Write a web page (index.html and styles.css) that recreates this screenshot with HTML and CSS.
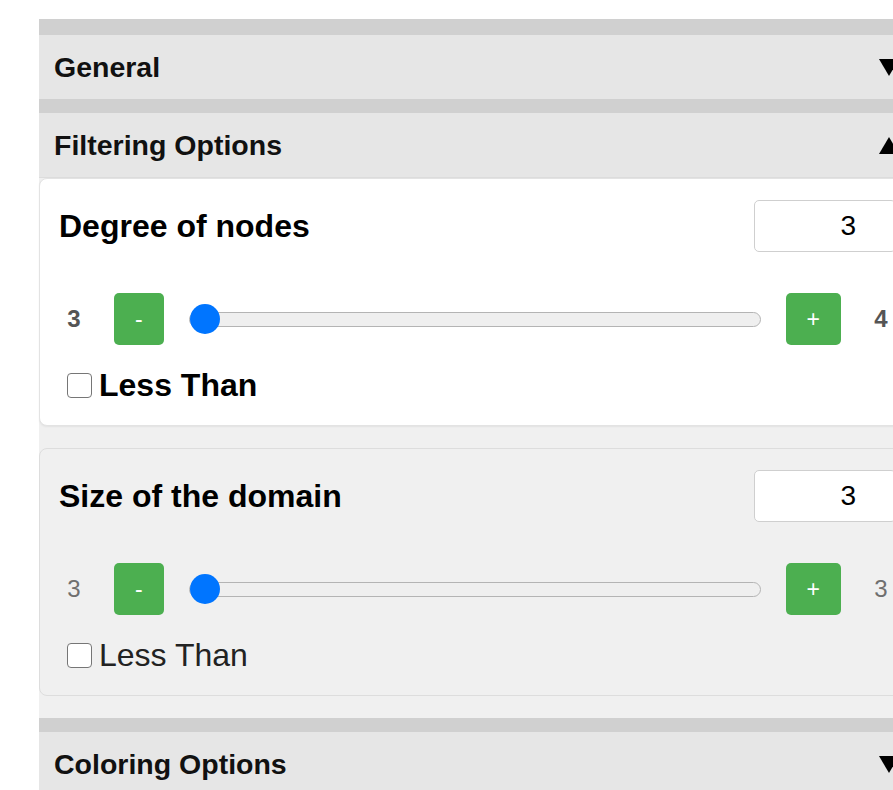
FILE: index.html
```html
<!DOCTYPE html>
<html lang="en">
<head>
<meta charset="utf-8">
<title>Graph settings</title>
<link rel="stylesheet" href="styles.css">
</head>
<body>
<div class="panel">
  <section class="section">
    <div class="section-header">
      <span class="section-title">General</span>
      <svg class="caret" width="20" height="17" viewBox="0 0 20 17"><polygon points="0,0 20,0 10,17"/></svg>
    </div>
  </section>

  <section class="section is-open">
    <div class="section-header">
      <span class="section-title">Filtering Options</span>
      <svg class="caret" width="20" height="17" viewBox="0 0 20 17"><polygon points="10,0 20,17 0,17"/></svg>
    </div>
    <div class="section-body">
      <div class="filter-card is-active">
        <div class="filter-head">
          <span class="filter-name">Degree of nodes</span>
          <input class="filter-value" type="text" value="3">
        </div>
        <div class="filter-range">
          <span class="range-end">3</span>
          <button class="step-btn" type="button">-</button>
          <input class="range" type="range" min="3" max="4" value="3">
          <button class="step-btn" type="button">+</button>
          <span class="range-end">4</span>
        </div>
        <label class="less-than"><input type="checkbox">Less Than</label>
      </div>

      <div class="filter-card">
        <div class="filter-head">
          <span class="filter-name">Size of the domain</span>
          <input class="filter-value" type="text" value="3">
        </div>
        <div class="filter-range">
          <span class="range-end">3</span>
          <button class="step-btn" type="button">-</button>
          <input class="range" type="range" min="3" max="3" value="3">
          <button class="step-btn" type="button">+</button>
          <span class="range-end">3</span>
        </div>
        <label class="less-than"><input type="checkbox">Less Than</label>
      </div>
    </div>
  </section>

  <section class="section">
    <div class="section-header">
      <span class="section-title">Coloring Options</span>
      <svg class="caret" width="20" height="17" viewBox="0 0 20 17"><polygon points="0,0 20,0 10,17"/></svg>
    </div>
  </section>
</div>
</body>
</html>
```

FILE: styles.css
```css
html, body {
  margin: 0;
  padding: 0;
  background: #fff;
  overflow: hidden;
}

body {
  font-family: "Liberation Sans", Arial, sans-serif;
  color: #000;
}

.panel {
  width: 877px;
  margin: 19px 0 0 39px;
  border-top: 2px solid #d0d0d0;
}

/* accordion sections */
.section {
  border-top: 14px solid #d0d0d0;
}

.section-header {
  display: flex;
  align-items: center;
  justify-content: space-between;
  height: 64px;
  padding: 0 17px 0 15px;
  background: #e6e6e6;
}

.section-title {
  font-size: 28.5px;
  font-weight: bold;
  color: #111;
}

.caret {
  display: block;
  fill: #000;
}

.is-open .section-header {
  border-bottom: 1px solid #dcdcdc;
}

.section-body {
  display: flex;
  flex-direction: column;
  gap: 22px;
  padding-bottom: 22px;
  background: #f0f0f0;
}

/* filter cards */
.filter-card {
  padding: 21px 19px;
  background: #f0f0f0;
  border: 1px solid #dddddd;
  border-radius: 8px;
}

.filter-card.is-active {
  background: #fff;
  border-color: #e3e3e3;
  box-shadow: 0 1px 2px rgba(0, 0, 0, 0.06);
}

.filter-head {
  display: flex;
  align-items: center;
  justify-content: space-between;
  height: 52px;
}

.filter-name {
  font-size: 32px;
  font-weight: bold;
}

.filter-value {
  box-sizing: border-box;
  width: 142px;
  height: 52px;
  margin: 0;
  padding: 0 39px 0 8px;
  border: 1px solid #cfcfcf;
  border-radius: 5px;
  background: #fff;
  font-family: "Liberation Sans", Arial, sans-serif;
  font-size: 28px;
  color: #000;
  text-align: right;
}

.filter-range {
  display: flex;
  align-items: center;
  gap: 25px;
  height: 52px;
  margin-top: 41px;
}

.range-end {
  width: 30px;
  text-align: center;
  font-size: 24px;
  color: #6f6f6f;
}

.is-active .range-end {
  font-weight: bold;
  color: #555;
}

.step-btn {
  height: 52px;
  margin: 0;
  padding: 0 21px;
  border: none;
  border-radius: 5px;
  background: #4caf50;
  color: #fff;
  font-family: "Liberation Sans", Arial, sans-serif;
  font-size: 23px;
}

/* slider */
.range {
  flex: 1;
  height: 30px;
  margin: 0;
  -webkit-appearance: none;
  appearance: none;
  background: transparent;
}

.range::-webkit-slider-runnable-track {
  height: 15px;
  box-sizing: border-box;
  background: #efefef;
  border: 1.5px solid #b4b4b4;
  border-radius: 8px;
}

.range::-webkit-slider-thumb {
  -webkit-appearance: none;
  appearance: none;
  width: 30px;
  height: 30px;
  margin-top: -9px;
  border-radius: 50%;
  background: #0075ff;
}

/* checkbox row */
.less-than {
  display: flex;
  align-items: center;
  height: 38px;
  margin-top: 21px;
  font-size: 32px;
  color: #222;
}

.is-active .less-than {
  font-weight: bold;
  color: #000;
}

.less-than input {
  -webkit-appearance: none;
  appearance: none;
  box-sizing: border-box;
  width: 25px;
  height: 25px;
  margin: 0 7px 0 8px;
  border: 1.5px solid #767676;
  border-radius: 4px;
  background: #fff;
}
```
